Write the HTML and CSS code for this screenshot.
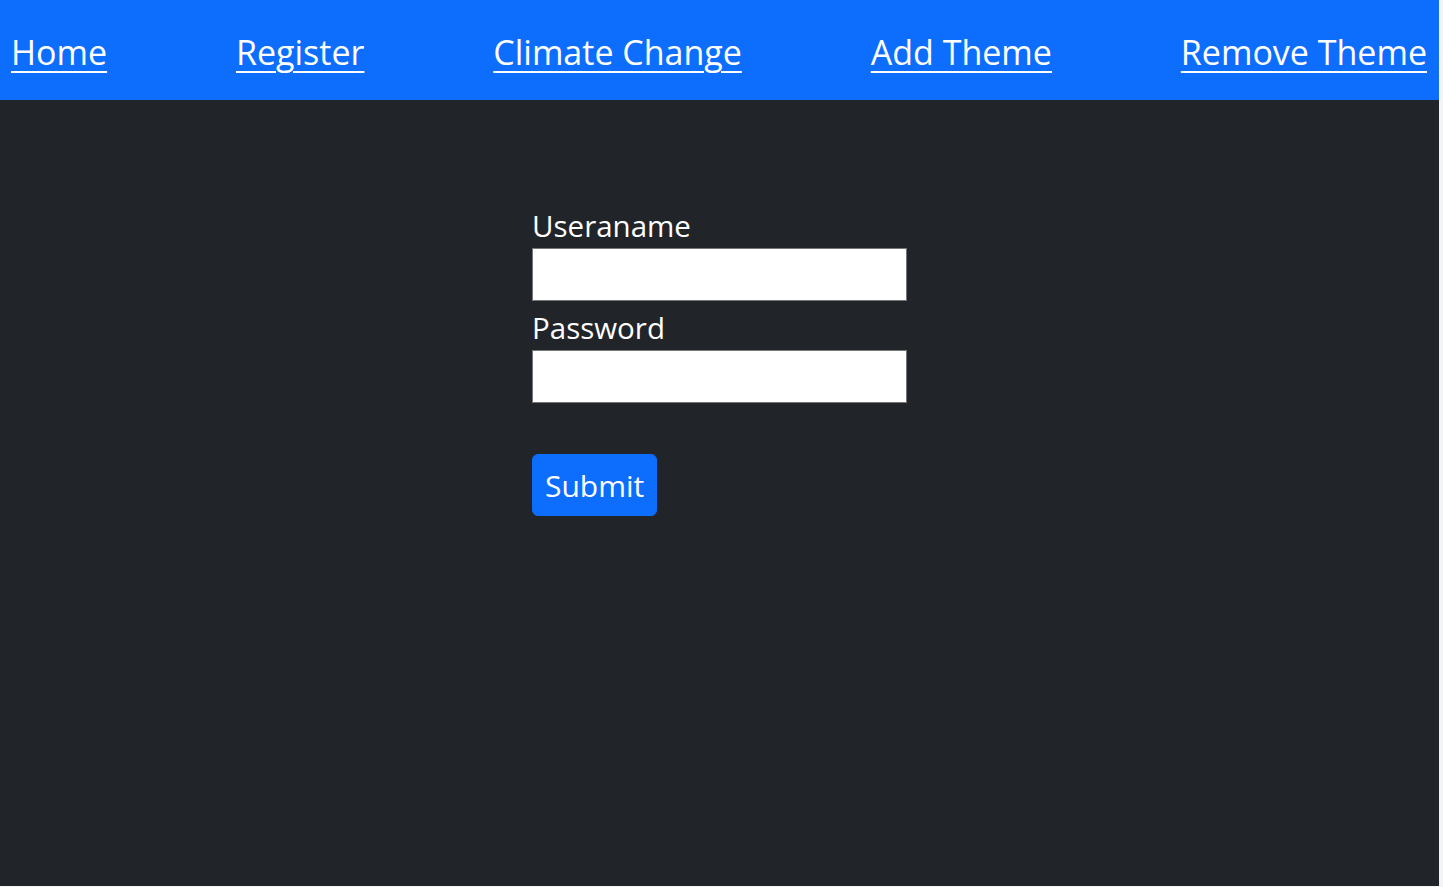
FILE: index.html
```html
<!DOCTYPE html>
<html lang="en">
<head>
<meta charset="utf-8">
<title>Login</title>
<link rel="stylesheet" href="styles.css">
</head>
<body>
<div class="page">
  <nav class="topnav">
    <a href="#" class="nav-link">Home</a>
    <a href="#" class="nav-link">Register</a>
    <a href="#" class="nav-link">Climate Change</a>
    <a href="#" class="nav-link">Add Theme</a>
    <a href="#" class="nav-link">Remove Theme</a>
  </nav>
  <main class="content">
    <form class="login-form">
      <label class="field-label" for="username">Useraname</label>
      <input class="field-input" type="text" id="username">
      <label class="field-label" for="password">Password</label>
      <input class="field-input" type="password" id="password">
      <button class="submit-btn" type="button">Submit</button>
    </form>
  </main>
</div>
</body>
</html>
```
FILE: styles.css
```css
html, body {
  margin: 0;
  padding: 0;
  background: #f3f4f6;
}
body {
  font-family: "Open Sans", "Noto Sans", sans-serif;
}
.page {
  width: 1439px;
  height: 886px;
  background: #212529;
  display: flex;
  flex-direction: column;
}
.topnav {
  height: 100px;
  background: #0d6efd;
  display: flex;
  align-items: center;
  justify-content: space-between;
  padding: 0 12px 0 11px;
  box-sizing: border-box;
}
.nav-link {
  color: #ffffff;
  font-size: 34px;
  line-height: 1.2;
  text-decoration: underline;
  text-decoration-thickness: 2px;
  text-underline-offset: 6px;
  padding-top: 5px;
}
.content {
  display: flex;
  justify-content: center;
  padding-top: 100px;
}
.login-form {
  width: 375px;
  display: flex;
  flex-direction: column;
  align-items: flex-start;
}
.field-label {
  color: #ffffff;
  font-size: 29.5px;
  line-height: 48px;
  height: 48px;
  padding-top: 2px;
  box-sizing: border-box;
}
.field-input {
  width: 375px;
  height: 53px;
  box-sizing: border-box;
  margin: 0;
  border: 1px solid #767676;
  border-radius: 0;
  background: #ffffff;
}
.field-input + .field-label {
  margin-top: 1px;
}
.submit-btn {
  margin-top: 51px;
  height: 62px;
  padding: 2px 12px 0;
  border: 1px solid #0d6efd;
  border-radius: 6px;
  background: #0d6efd;
  color: #ffffff;
  font-family: "Open Sans", "Noto Sans", sans-serif;
  font-size: 30px;
  line-height: 48px;
}
```
